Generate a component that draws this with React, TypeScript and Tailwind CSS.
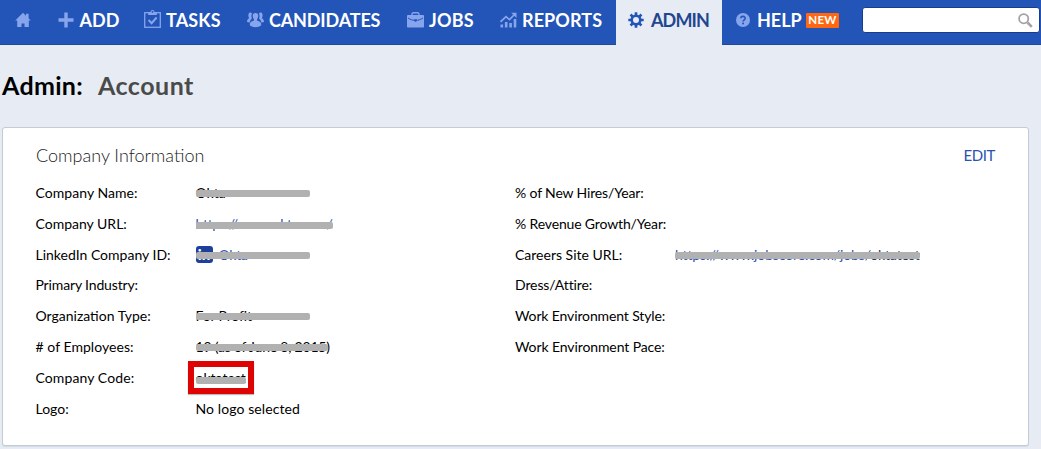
import type { ReactNode } from 'react';

function HomeIcon() {
  return (
    <svg viewBox="0 0 16 16" className="h-4 w-4 shrink-0" fill="#86a5ec">
      <path d="M8 .8 11 3.700V1.800h2.600v4.400L15.800 8.500H13.800V15H9.500v-3.400h-3V15H2.200V8.500H.2Z" />
    </svg>
  );
}

function PlusIcon() {
  return (
    <svg viewBox="0 0 16 16" className="h-4 w-4 shrink-0" fill="#86a5ec">
      <path d="M6.300.5h3.400v5.800h5.800v3.400H9.700v5.800H6.300V9.700H.5V6.300h5.800Z" />
    </svg>
  );
}

function TasksIcon() {
  return (
    <svg viewBox="0 0 17 19" className="-mt-[3px] h-[19px] w-[17px] shrink-0" fill="none" stroke="#86a5ec">
      <rect x="0.7" y="3.7" width="15.6" height="14.6" strokeWidth="1.3" />
      <path d="M4.200 3h2.300a2 2 0 0 1 4 0h2.300v2.900H4.200Z" fill="#86a5ec" stroke="none" />
      <circle cx="8.5" cy="2.9" r="0.9" fill="#2355b8" stroke="none" />
      <path d="m4.600 11 3 3.200 5-5.700" strokeWidth="2" />
    </svg>
  );
}

function CandidatesIcon() {
  return (
    <svg viewBox="0 0 17 16" className="h-4 w-[17px] shrink-0" fill="#86a5ec">
      <path d="M3 .6c1 0 1.800.5 2 1.300-.9 1.300-.8 3 0 4.300L4 7.400c-1 .8-1 2-1.200 3L0 9.900C.1 7.800.8 7.100 2.200 6.300 1.200 5 .8 1 3 .6Z" />
      <path d="M14 .6c-1 0-1.800.5-2 1.300.9 1.300.8 3 0 4.300l1 1.200c1 .8 1 2 1.200 3l2.800-.5c-.1-2.100-.8-2.800-2.200-3.600C15.800 5 16.200 1 14 .6Z" />
      <path d="M8.500 1c2.200 0 3 1.500 2.700 3.500-.2 1.300-.6 2-1.200 2.700v1.300c2.800.8 4.300 1.800 4.300 4.700-1.500 1.300-3.500 2-5.800 2s-4.300-.7-5.800-2c0-2.900 1.500-3.900 4.300-4.700V7.200C6.400 6.500 6 5.800 5.800 4.500 5.500 2.500 6.300 1 8.500 1Z" />
    </svg>
  );
}

function JobsIcon() {
  return (
    <svg viewBox="0 0 17 16" className="h-4 w-[17px] shrink-0">
      <path d="M5 4V2A1.400 1.400 0 0 1 6.400.8h4.200A1.400 1.400 0 0 1 12 2V4" fill="none" stroke="#86a5ec" strokeWidth="1.4" />
      <rect y="3" width="17" height="12.5" rx=".8" fill="#86a5ec" />
      <path d="M1 6c4.500 3.200 10.500 3.200 15 0" fill="none" stroke="#2355b8" strokeWidth="1" />
      <path d="M7.200 7.300h2.600v1.800l-1.300 1-1.300-1Z" fill="#2355b8" />
    </svg>
  );
}

function ReportsIcon() {
  return (
    <svg viewBox="0 0 17 16" className="h-4 w-[17px] shrink-0" fill="#86a5ec">
      <path d="M.5 12.500h2.600v3H.5zM4.900 10h2.600v5.500H4.900zM9.300 11h2.600v4.500H9.300zM13.700 7h2.600v8.500h-2.600z" />
      <path d="M.5 9.800 6 4.700l3.500 3 5-5.200" fill="none" stroke="#86a5ec" strokeWidth="1.7" />
      <path d="M11.200.8h5.300v5.300Z" />
    </svg>
  );
}

function GearIcon() {
  return (
    <svg viewBox="0 0 16 16" className="h-4 w-4 shrink-0" fill="none" stroke="#2355b8">
      <circle cx="8" cy="8" r="4.3" strokeWidth="2.6" />
      <path
        d="M8 .3v3M8 12.700v3M.3 8h3M12.700 8h3M2.560 2.560l2.100 2.100M11.340 11.340l2.100 2.100M2.560 13.440l2.100-2.100M11.340 4.660l2.100-2.100"
        strokeWidth="2.7"
      />
    </svg>
  );
}

function HelpIcon() {
  return (
    <svg viewBox="0 0 14 14" className="h-3.5 w-3.5 shrink-0">
      <circle cx="7" cy="7" r="7" fill="#86a5ec" />
      <path d="M4.800 5.300C4.900 2.700 9.200 2.700 9.200 5.200c0 1.600-2.100 1.600-2.100 3.400" fill="none" stroke="#2355b8" strokeWidth="1.6" />
      <rect x="6.2" y="9.6" width="1.8" height="1.7" fill="#2355b8" />
    </svg>
  );
}

function SearchIcon() {
  return (
    <svg viewBox="0 0 15 15" className="h-[15px] w-[15px]" fill="none" stroke="#a3a3a3">
      <circle cx="5.7" cy="5.7" r="4.6" strokeWidth="1.8" />
      <path d="m9.500 9.500 4.300 4.300" strokeWidth="2.6" />
    </svg>
  );
}

function NavItem({ icon, label, width, tracking = '' }: { icon: ReactNode; label: string; width: string; tracking?: string }) {
  return (
    <a className={`flex h-10 shrink-0 items-center gap-[5px] ${width}`}>
      {icon}
      <span className={`whitespace-nowrap ${tracking}`}>{label}</span>
    </a>
  );
}

function Redacted({ children, bar, className = '' }: { children: ReactNode; bar: string; className?: string }) {
  return (
    <span className={`relative whitespace-nowrap ${className}`}>
      {children}
      <span className={`absolute left-0 rounded-[2px] bg-[#b1b1b1] ${bar}`} />
    </span>
  );
}

function Field({ label, tracking = '', children }: { label: string; tracking?: string; children?: ReactNode }) {
  return (
    <div className="flex h-[30.83px] items-center">
      <dt className={`w-40 shrink-0 whitespace-nowrap ${tracking}`}>{label}</dt>
      <dd className="flex items-center">{children}</dd>
    </div>
  );
}

export default function App() {
  return (
    <div className="h-[449px] w-[1041px] overflow-hidden bg-[#e7ecf4] font-['Lato',sans-serif] text-black">
      <nav className="flex h-[45px] border-b border-[#204a94] bg-[#2355b8] pl-[15px] text-[18px] font-bold text-white">
        <a className="flex h-10 w-[42.5px] shrink-0 items-center">
          <HomeIcon />
        </a>
        <NavItem icon={<PlusIcon />} label="ADD" width="w-[86.5px]" tracking="pl-px" />
        <NavItem icon={<TasksIcon />} label="TASKS" width="w-[103px]" tracking="tracking-[0.1px]" />
        <NavItem icon={<CandidatesIcon />} label="CANDIDATES" width="w-[160px]" tracking="tracking-[-0.15px]" />
        <NavItem icon={<JobsIcon />} label="JOBS" width="w-[93px]" tracking="tracking-[0.2px]" />
        <NavItem icon={<ReportsIcon />} label="REPORTS" width="w-[116px]" tracking="tracking-[0.1px]" />
        <a className="flex h-[45px] w-[106px] shrink-0 items-center gap-[7px] bg-[#e7ecf4] pb-[5px] pl-3 text-[#1f4690]">
          <GearIcon />
          <span className="tracking-[-0.9px]">ADMIN</span>
        </a>
        <a className="flex h-10 w-[140px] shrink-0 items-center pl-3.5">
          <HelpIcon />
          <span className="ml-[7px] w-[49px]">HELP</span>
          <span className="flex h-[15px] w-[33px] items-center justify-center rounded-[1px] bg-[#ff6711] text-[11.5px] tracking-[0.3px]">
            NEW
          </span>
        </a>
        <div className="mt-[7px] flex h-[26px] w-[178px] shrink-0 items-center justify-end rounded-[3px] border border-[#173d8b] bg-white pr-[6px]">
          <SearchIcon />
        </div>
      </nav>

      <h1 className="flex h-[82px] items-center pl-[2px] text-[25px] font-bold">
        <span className="w-24 tracking-[0.3px]">Admin:</span>
        <span className="tracking-[0.5px] text-[#4a4a4a]">Account</span>
      </h1>

      <section className="ml-[2px] h-[319px] w-[1027px] rounded-[3px] border border-[#c3cbd6] bg-white shadow-[0_1px_1px_#d3dae3]">
        <header className="flex h-[49px] items-center justify-between pt-[5px] pr-[33px] pl-[33px]">
          <h2 className="text-[18px] font-light text-[#222]">Company Information</h2>
          <a className="text-[15px] tracking-[-0.4px] text-[#2a52b0]">EDIT</a>
        </header>
        <div className="flex pl-[32.5px] text-[14px]">
          <dl className="w-[479.5px]">
            <Field label="Company Name:" tracking="tracking-[0.05px]">
              <Redacted bar="top-[8px] h-[7px] w-[114px]">Okta</Redacted>
            </Field>
            <Field label="Company URL:">
              <Redacted className="tracking-[-0.3px] text-[#2a52b0]" bar="top-[9px] h-[7px] w-[137px]">
                https://www.okta.com/
              </Redacted>
            </Field>
            <Field label="LinkedIn Company ID:">
              <span className="relative flex items-center gap-[6px] text-[#2a52b0]">
                <span className="flex h-[17px] w-[17px] items-center justify-center rounded-[3px] bg-[#1e409c] text-[15px] leading-none font-black text-white">
                  in
                </span>
                <span className="tracking-[-0.2px]">Okta</span>
                <span className="absolute top-[8px] left-0 h-[7px] w-[114px] rounded-[2px] bg-[#b1b1b1]" />
              </span>
            </Field>
            <Field label="Primary Industry:" tracking="tracking-[-0.15px]" />
            <Field label="Organization Type:">
              <Redacted className="tracking-[-0.15px]" bar="top-[8px] h-[7px] w-[114px]">
                For Profit
              </Redacted>
            </Field>
            <Field label="# of Employees:" tracking="tracking-[0.05px]">
              <Redacted className="tracking-[-0.2px]" bar="top-[8px] h-[7px] w-[132px]">
                19 (as of June 8, 2015)
              </Redacted>
            </Field>
            <Field label="Company Code:" tracking="tracking-[0.1px]">
              <span className="relative">
                <Redacted bar="top-[8px] h-[7px] w-[50px]">oktatest</Redacted>
                <span className="absolute top-[-6px] left-[-8px] h-[33px] w-[66px] border-[6px] border-[#df0404] shadow-[0_1px_1px_#bbb]" />
              </span>
            </Field>
            <Field label="Logo:">
              <span className="tracking-[0.1px]">No logo selected</span>
            </Field>
          </dl>
          <dl>
            <Field label="% of New Hires/Year:" tracking="tracking-[-0.15px]" />
            <Field label="% Revenue Growth/Year:" tracking="tracking-[-0.15px]" />
            <Field label="Careers Site URL:">
              <Redacted className="tracking-[-0.13px] text-[#2a52b0]" bar="top-[8px] h-[7px] w-[245px]">
                https://www.jobscore.com/jobs/<span className="text-[#1c3266]">oktatest</span>
              </Redacted>
            </Field>
            <Field label="Dress/Attire:" tracking="tracking-[-0.1px]" />
            <Field label="Work Environment Style:" tracking="tracking-[-0.13px]" />
            <Field label="Work Environment Pace:" tracking="tracking-[-0.1px]" />
          </dl>
        </div>
      </section>
    </div>
  );
}
